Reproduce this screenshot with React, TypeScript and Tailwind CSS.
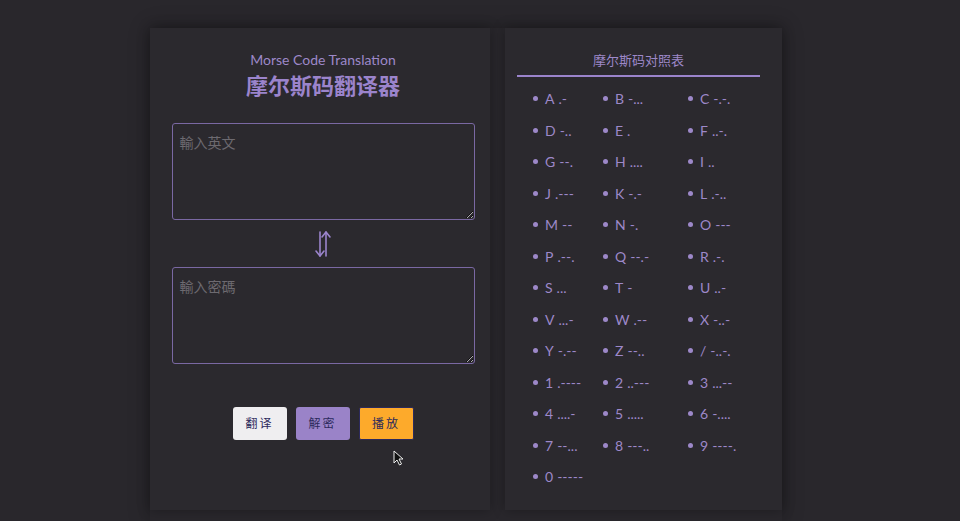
import { useState } from "react";

const MORSE: [string, string][] = [
    ["A", ".-"], ["B", "-..."], ["C", "-.-."],
    ["D", "-.."], ["E", "."], ["F", "..-."],
    ["G", "--."], ["H", "...."], ["I", ".."],
    ["J", ".---"], ["K", "-.-"], ["L", ".-.."],
    ["M", "--"], ["N", "-."], ["O", "---"],
    ["P", ".--."], ["Q", "--.-"], ["R", ".-."],
    ["S", "..."], ["T", "-"], ["U", "..-"],
    ["V", "...-"], ["W", ".--"], ["X", "-..-"],
    ["Y", "-.--"], ["Z", "--.."], ["/", "-..-."],
    ["1", ".----"], ["2", "..---"], ["3", "...--"],
    ["4", "....-"], ["5", "....."], ["6", "-...."],
    ["7", "--..."], ["8", "---.."], ["9", "----."],
    ["0", "-----"],
];

const font = {
    fontFamily: 'Lato, "Noto Sans CJK SC", sans-serif',
};

function SwapIcon() {
    return (
        <svg width="18" height="28" viewBox="0 0 18 28" fill="none" stroke="#9b84cc" strokeWidth="1.6" strokeLinecap="round" strokeLinejoin="round">
            <path d="M6 2 L6 26" />
            <path d="M2 21 L6 26 L10 21" />
            <path d="M12 26 L12 2" />
            <path d="M8 7 L12 2 L16 7" />
        </svg>
    );
}

function Cursor() {
    return (
        <svg width="12" height="16" viewBox="0 0 12 16" className="absolute left-[393px] top-[450px]">
            <path d="M1 1 L1 13 L4 10 L6.5 15 L8.5 14 L6 9 L10 9 Z" fill="#111" stroke="#eee" strokeWidth="1" />
        </svg>
    );
}

export default function App() {
    const [plain, setPlain] = useState("");
    const [code, setCode] = useState("");

    return (
        <div
            className="relative min-h-[521px] w-full bg-[#29272c] flex pl-[150px] pt-[28px]"
            style={font}
        >

            <div className="flex gap-[15px] shadow-[0_0_20px_rgba(0,0,0,0.25)]">

                {/* Translator */}

                <section className="w-[340px] h-[482px] bg-[#2b292e] shadow-[0_0_12px_rgba(0,0,0,0.3)] flex flex-col items-center pt-[22px] pl-[6px]">

                    <p className="text-[14px] leading-[20px] text-[#9d88c9]">
                        Morse Code Translation
                    </p>

                    <h1 className="text-[22px] leading-[30px] font-bold text-[#9b84cc] mt-[1px]">
                        摩尔斯码翻译器
                    </h1>

                    <textarea
                        value={plain}
                        onChange={(e) => setPlain(e.target.value)}
                        placeholder="輸入英文"
                        className="mt-[22px] w-[303px] h-[97px] bg-transparent border border-[#7a68a3] rounded-[3px] px-[7px] py-[8px] text-[14px] text-[#cfc6e0] placeholder:text-[#6d6a70] outline-none"
                        style={font}
                    />

                    <div className="mt-[7px] mb-[7px] h-[33px] flex items-center">
                        <SwapIcon />
                    </div>

                    <textarea
                        value={code}
                        onChange={(e) => setCode(e.target.value)}
                        placeholder="輸入密碼"
                        className="w-[303px] h-[97px] bg-transparent border border-[#7a68a3] rounded-[3px] px-[7px] py-[8px] text-[14px] text-[#cfc6e0] placeholder:text-[#6d6a70] outline-none"
                        style={font}
                    />

                    <div className="flex gap-[9px] mt-[43px]">
                        <button className="w-[54px] h-[33px] rounded-[3px] bg-[#efeef0] text-[#2c2a5c] text-[12px] tracking-[2px]">
                            翻译
                        </button>
                        <button className="w-[54px] h-[33px] rounded-[3px] bg-[#9a83c8] text-[#2c2a5c] text-[12px] tracking-[2px]">
                            解密
                        </button>
                        <button className="w-[55px] h-[33px] rounded-[2px] bg-[#fdaa2b] border border-[#2c2a5c] text-[#2c2a5c] text-[12px] tracking-[2px]">
                            播放
                        </button>
                    </div>

                </section>

                {/* Table */}

                <section className="w-[277px] h-[482px] bg-[#2b292e] shadow-[0_0_12px_rgba(0,0,0,0.3)] pl-[12px] pt-[22px]">

                    <div className="w-[243px] border-b-2 border-[#9b84cc] pb-[5px] text-center text-[13px] leading-[20px] text-[#9d88c9]">
                        摩尔斯码对照表
                    </div>

                    <ul className="grid grid-cols-[70px_85px_auto] mt-[6px] pl-[16px]">
                        {MORSE.map(([ch, m]) => (
                            <li key={ch} className="h-[31.5px] flex items-center text-[14px] text-[#9d88c9]">
                                <span className="w-[5px] h-[5px] rounded-full bg-[#9d88c9] mr-[7px]" />
                                <span>{ch}</span>
                                <span className="ml-[4px]">{m}</span>
                            </li>
                        ))}
                    </ul>

                </section>

            </div>

            <Cursor />

        </div>
    );
}
